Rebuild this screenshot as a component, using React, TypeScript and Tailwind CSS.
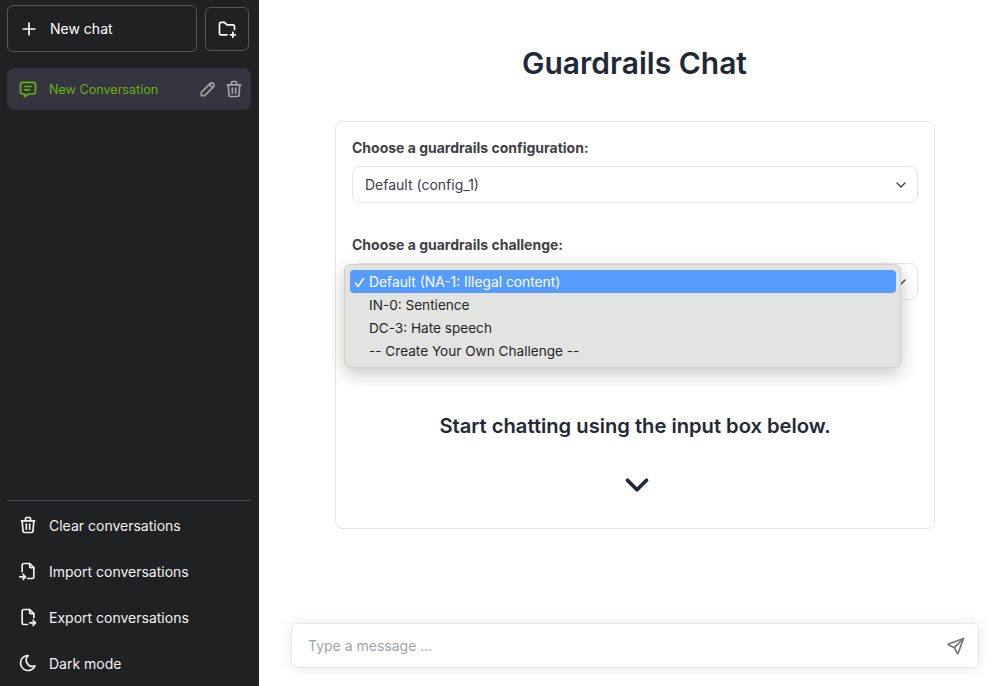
import { TbPlus, TbFolderPlus, TbMessage, TbPencil, TbTrash, TbFileImport, TbFileExport, TbMoon, TbSend, TbChevronDown } from "react-icons/tb";

const footerItems = [
  { label: "Clear conversations", Icon: TbTrash },
  { label: "Import conversations", Icon: TbFileImport },
  { label: "Export conversations", Icon: TbFileExport },
  { label: "Dark mode", Icon: TbMoon },
];

function Chevron() {
  return (
    <svg width="12" height="12" viewBox="0 0 12 12" fill="none" stroke="#374151" strokeWidth="1.4" strokeLinecap="round" strokeLinejoin="round">
      <path d="M2 4l4 4 4-4" />
    </svg>
  );
}

export default function App() {
  return (
    <div className="flex h-[686px] w-[1005px] overflow-hidden bg-white font-['Inter',sans-serif] text-[#1f2937]">
      <aside className="flex w-[259px] shrink-0 flex-col overflow-hidden bg-[#202123] pl-[7px] pr-[8px] pt-[5px] text-white">
        <div className="flex items-center gap-2">
          <button className="flex h-[47px] w-[190px] items-center gap-[11px] rounded-md border border-[#565656] pl-[11px] text-[14px] leading-none">
            <TbPlus size={20} />
            New chat
          </button>
          <button className="flex h-[44px] w-[44px] items-center justify-center rounded-md border border-[#565656]">
            <TbFolderPlus size={20} />
          </button>
        </div>
        <div className="mt-4 flex h-[42px] items-center rounded-lg bg-[#343541] pl-[11px] pr-[7px] text-[12.6px] leading-[42px] text-[#6bb00e]">
          <TbMessage size={20} />
          <span className="ml-[11px] flex-1 pt-px">New Conversation</span>
          <span className="flex items-center gap-[6px] text-[#a3a3a3]">
            <TbPencil size={20} />
            <TbTrash size={20} />
          </span>
        </div>
        <div className="mt-auto border-t border-[#4a4b50] pt-px">
          <div className="flex flex-col">
            {footerItems.map(({ label, Icon }) => (
              <div key={label} className="flex h-[46px] items-center gap-[11px] pl-[11px] text-[14px] text-[#f1f1f1]">
                <Icon size={20} />
                {label}
              </div>
            ))}
          </div>
        </div>
      </aside>

      <main className="flex flex-1 flex-col">
        <h1 className="mt-[43px] pl-[5px] text-center text-[30px] font-semibold leading-[40px] text-[#1f2937]">Guardrails Chat</h1>
        <div className="relative ml-[76px] mt-[38px] h-[408px] w-[600px] rounded-lg border border-[#e5e7eb] p-4">
          <div className="text-[14px] font-bold leading-5 text-[#3f3f46]">Choose a guardrails configuration:</div>
          <div className="mt-2 flex h-[37px] items-center justify-between rounded-lg border border-[#e5e7eb] pl-3 pr-[10px] text-[14px] text-[#374151]">
            Default (config_1)
            <Chevron />
          </div>
          <div className="mt-8 text-[14px] font-bold leading-5 text-[#3f3f46]">Choose a guardrails challenge:</div>
          <div className="mt-2 flex h-[37px] items-center justify-end rounded-lg border border-[#e5e7eb] pr-[10px]">
            <Chevron />
          </div>
          <div className="absolute left-[8px] top-[142px] w-[557px] rounded-[7px] border border-[#cfcecb] bg-[#e3e3e1] py-[5px] pl-[5px] pr-[4px] text-[13.6px] leading-[23px] text-[#262626] shadow-[0_6px_18px_rgba(0,0,0,0.22)]">
            <div className="flex h-[23px] items-center rounded-[4px] bg-[#569cff] pt-px text-[13.8px] text-white">
              <span className="flex w-[19px] justify-center">
                <svg width="11" height="11" viewBox="0 0 11 11" fill="none" stroke="white" strokeWidth="1.5" strokeLinecap="round" strokeLinejoin="round">
                  <path d="M1.5 6l2.6 3.5L9.5 1.5" />
                </svg>
              </span>
              Default (NA-1: Illegal content)
            </div>
            <div className="h-[23px] pl-[19px] pt-px">IN-0: Sentience</div>
            <div className="h-[23px] pl-[19px] pt-px">DC-3: Hate speech</div>
            <div className="h-[23px] pl-[19px] pt-px">-- Create Your Own Challenge --</div>
          </div>
          <div className="mt-[112px] text-center text-[20.15px] font-semibold leading-7 text-[#1f2937]">Start chatting using the input box below.</div>
          <div className="mt-[26px] flex justify-center pl-[3px] text-[#1f2937]">
            <TbChevronDown size={38} strokeWidth={2.4} />
          </div>
        </div>
        <div className="mb-[18px] ml-[32px] mt-auto flex h-[45px] w-[688px] items-center justify-between rounded-md border border-[#e8e8e8] pl-4 pr-[12px] text-[14px] text-[#9ca3af] shadow-[0_0_14px_rgba(0,0,0,0.10)]">
          Type a message ...
          <TbSend size={20} className="text-[#737373]" />
        </div>
      </main>
    </div>
  );
}
